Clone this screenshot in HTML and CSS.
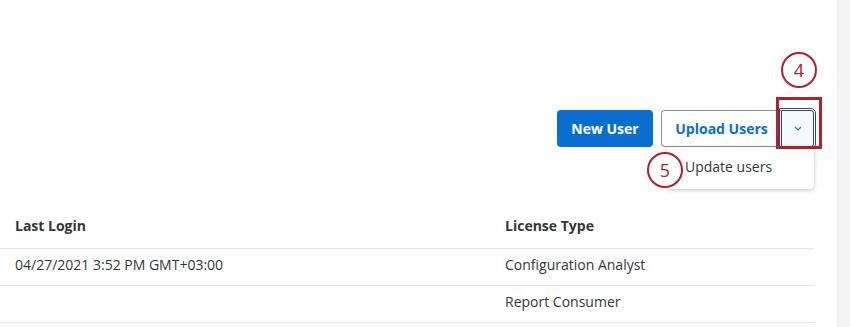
FILE: index.html
```html
<!DOCTYPE html>
<html>
<head>
<meta charset="utf-8">
<link rel="stylesheet" href="styles.css">
</head>
<body>
<div class="page">
  <div class="main">
    <div class="toolbar">
      <button class="btn btn-primary">New User</button>
      <div class="split">
        <button class="btn btn-secondary">Upload Users</button>
        <button class="btn btn-toggle" aria-label="More">
          <svg width="8" height="5" viewBox="0 0 8 5"><path d="M1 1 L4 4 L7 1" fill="none" stroke="#1f6fd0" stroke-width="1.2"/></svg>
        </button>
        <div class="menu"><div class="menu-item">Update users</div></div>
      </div>
    </div>
    <div class="table">
      <div class="row head">
        <div class="cell c1">Last Login</div>
        <div class="cell c2">License Type</div>
      </div>
      <div class="row">
        <div class="cell c1">04/27/2021 3:52 PM GMT+03:00</div>
        <div class="cell c2">Configuration Analyst</div>
      </div>
      <div class="row">
        <div class="cell c1"></div>
        <div class="cell c2">Report Consumer</div>
      </div>
    </div>
  </div>
  <div class="scrollbar"></div>
  <div class="mark circle c4">4</div>
  <div class="mark circle c5">5</div>
  <div class="mark box"></div>
</div>
</body>
</html>
```
FILE: styles.css
```css
html, body {
  margin: 0;
  padding: 0;
  background: #ffffff;
}
body {
  font-family: "Open Sans", "Noto Sans", sans-serif;
  font-size: 14px;
  color: #32363a;
}
.page {
  position: relative;
  display: flex;
  width: 850px;
  height: 327px;
  overflow: hidden;
}
.main {
  width: 814px;
  padding-right: 23px;
}
.scrollbar {
  width: 13px;
  background: #f4f4f6;
}
.toolbar {
  display: flex;
  justify-content: flex-end;
  gap: 8px;
  margin-top: 110px;
  height: 37px;
}
.btn {
  font-family: inherit;
  font-size: 14px;
  font-weight: 700;
  height: 37px;
  margin: 0;
  padding-bottom: 2px;
  cursor: pointer;
  box-sizing: border-box;
}
.btn-primary {
  width: 96px;
  background: #0a6ed1;
  color: #ffffff;
  border: none;
  border-radius: 4px;
}
.split {
  position: relative;
  display: flex;
}
.btn-secondary {
  width: 120px;
  background: #ffffff;
  color: #0a6ed1;
  border: 1px solid #89919a;
  border-right: none;
  border-radius: 4px 0 0 4px;
}
.btn-toggle {
  width: 33px;
  background: #f5f9fd;
  border: 1px solid #2b4866;
  outline: 1px solid #2b4866;
  outline-offset: 1px;
  border-radius: 0 3px 3px 0;
  display: flex;
  align-items: center;
  justify-content: center;
  padding: 0;
}
.menu {
  position: absolute;
  top: 37px;
  right: 0;
  width: 147px;
  height: 42px;
  background: #ffffff;
  box-shadow: 0 1px 4px rgba(0, 0, 0, 0.25);
  border-radius: 0 0 4px 4px;
  display: flex;
  align-items: center;
}
.menu-item {
  font-weight: 400;
  padding-left: 18px;
  padding-bottom: 4px;
}
.table {
  margin-top: 58px;
}
.row {
  display: flex;
  height: 36px;
  align-items: center;
  border-bottom: 1px solid #e5e5e5;
  box-sizing: content-box;
}
.row .cell {
  padding-bottom: 5px;
}
.row.head {
  height: 43px;
  font-weight: 700;
}
.row.head .cell {
  padding-bottom: 2px;
}
.cell {
  box-sizing: border-box;
}
.c1 {
  width: 505px;
  padding-left: 15px;
}
.c2 {
  flex: 1;
}
.mark {
  position: absolute;
  box-sizing: border-box;
}
.circle {
  width: 36px;
  height: 36px;
  border: 2px solid #b1202e;
  border-radius: 50%;
  background: #ffffff;
  color: #b1202e;
  font-size: 18px;
  display: flex;
  align-items: center;
  justify-content: center;
  line-height: 1;
}
.c4 {
  left: 781px;
  top: 52px;
}
.c5 {
  left: 647px;
  top: 152px;
}
.box {
  left: 776px;
  top: 97px;
  width: 46px;
  height: 52px;
  border: 3px solid #b1202e;
}
```
